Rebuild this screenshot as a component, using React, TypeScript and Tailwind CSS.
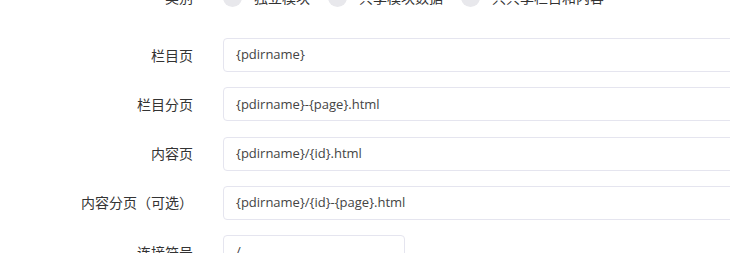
import React from "react";

const cjk = '"Noto Sans CJK SC", "Noto Sans", sans-serif';
const latin = '"Open Sans", "Noto Sans CJK SC", sans-serif';

function Row({ label, value, narrow }: { label: string; value: string; narrow?: boolean }) {
  return (
    <div className="flex items-center h-[34px] mb-[15.25px]">
      <div
        className="w-[193px] shrink-0 text-right text-[14px] text-[#333] whitespace-nowrap"
        style={{ fontFamily: cjk }}
      >
        {label}
      </div>
      <div
        className={`ml-[30px] h-[34px] shrink-0 border border-[#e5e5ef] rounded-[4px] flex items-center pl-[12px] text-[13px] text-[#444] ${narrow ? "w-[182px]" : "w-[560px]"}`}
        style={{ fontFamily: latin }}
      >
        {value}
      </div>
    </div>
  );
}

function Radio({ label }: { label: string }) {
  return (
    <div className="flex items-center mr-[18px] shrink-0">
      <span className="w-[19px] h-[19px] rounded-full bg-[#e8e8ec] mr-[12px]" />
      <span className="text-[14px] text-[#333] whitespace-nowrap" style={{ fontFamily: cjk }}>
        {label}
      </span>
    </div>
  );
}

export default function App() {
  return (
    <div className="w-[730px] h-[253px] overflow-hidden bg-white">
      <div className="mt-[-13px] w-[800px]">
        <div className="flex items-center h-[20px] mb-[31px]">
          <div
            className="w-[193px] shrink-0 text-right text-[14px] text-[#333]"
            style={{ fontFamily: cjk }}
          >
            类别
          </div>
          <div className="ml-[30px] flex items-center">
            <Radio label="独立模块" />
            <Radio label="共享模块数据" />
            <Radio label="只共享栏目和内容" />
          </div>
        </div>
        <Row label="栏目页" value="{pdirname}" />
        <Row label="栏目分页" value="{pdirname}-{page}.html" />
        <Row label="内容页" value="{pdirname}/{id}.html" />
        <Row label="内容分页（可选）" value="{pdirname}/{id}-{page}.html" />
        <Row label="连接符号" value="/" narrow />
      </div>
    </div>
  );
}
